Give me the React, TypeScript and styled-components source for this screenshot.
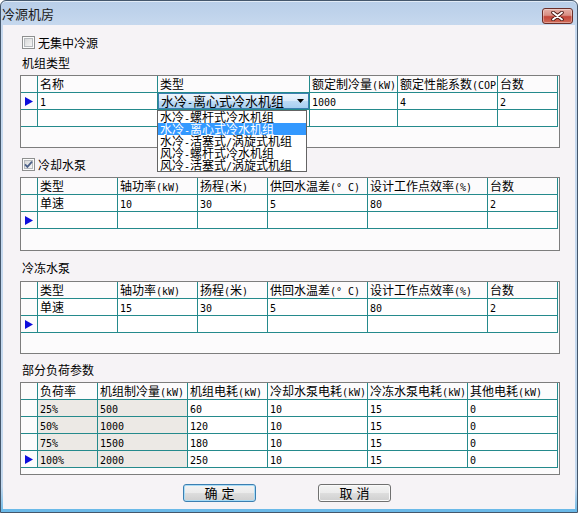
import React from "react";
import styled, { createGlobalStyle } from "styled-components";

const TEAL = "#248a8c";

const GlobalStyle = createGlobalStyle`
  html, body {
    margin: 0;
    padding: 0;
    background: #ffffff;
  }
  body {
    font-family: "Noto Sans CJK SC", "Noto Sans", sans-serif;
    font-size: 12px;
    color: #000;
  }
`;

const Window = styled.div`
  width: 578px;
  height: 513px;
  box-sizing: border-box;
  border: 1px solid #44576c;
  border-radius: 6px 6px 0 0;
  padding: 0 2px 3px;
  display: flex;
  flex-direction: column;
  background: linear-gradient(#b8cee8, #c6d8ee 24px, #c4d8ee 95%, #6fbbe8 100%);
  box-shadow: inset 0 -3px 0 #6ab9e8, inset 0 1px 0 #e1ebf6;
  overflow: hidden;
`;

const TitleBar = styled.div`
  height: 24px;
  flex-shrink: 0;
  display: flex;
  align-items: flex-start;
`;

const Title = styled.div`
  margin: 5px 0 0 -1px;
  font-size: 13px;
  line-height: 15px;
  color: #1b1b1b;
`;

const CloseButton = styled.div`
  margin: 7px 2px 0 auto;
  width: 31px;
  height: 16px;
  box-sizing: border-box;
  border: 1px solid #6b2e28;
  border-radius: 3px;
  background: linear-gradient(#e6b0a7, #d88e83 45%, #c4463a 55%, #d06b58);
  box-shadow: inset 0 0 0 1px rgba(255, 255, 255, 0.35);
  display: flex;
  align-items: center;
  justify-content: center;
`;

const Client = styled.div`
  flex: 1;
  background: #f6f3f6;
  padding-left: 17px;
  display: flex;
  flex-direction: column;
  align-items: flex-start;
`;

const CheckRow = styled.div<{ $top: number }>`
  margin: ${(p) => p.$top}px 0 0 2px;
  height: 13px;
  display: flex;
  align-items: center;
  gap: 3px;
  line-height: 13px;
`;

const Label = styled.div<{ $top: number }>`
  margin: ${(p) => p.$top}px 0 0 2px;
  height: 13px;
  line-height: 13px;
`;

const Latin = styled.span`
  font-family: "DejaVu Sans Mono", "Liberation Mono", monospace;
  font-size: 10px;
`;

const GridBox = styled.div<{ $top: number; $h: number }>`
  margin-top: ${(p) => p.$top}px;
  width: 540px;
  height: ${(p) => p.$h}px;
  box-sizing: border-box;
  border: 1px solid #7d7d7d;
  background: #fcfbfc;
`;

const GridRow = styled.div<{ $cols: string }>`
  display: grid;
  grid-template-columns: ${(p) => p.$cols};
`;

type Tone = "head" | "body" | "shade";

const Cell = styled.div<{ $tone: Tone }>`
  height: 17px;
  box-sizing: border-box;
  border-right: 1px solid ${TEAL};
  border-bottom: 1px solid ${TEAL};
  padding-left: 2px;
  line-height: 16px;
  white-space: nowrap;
  overflow: hidden;
  background: ${(p) =>
    p.$tone === "shade" ? "#ece9e5" : p.$tone === "head" ? "#fcfbfc" : "#ffffff"};
`;

const RowHead = styled(Cell)`
  padding-left: 4px;
  display: flex;
  align-items: center;
`;

const ComboCell = styled(Cell)`
  padding: 0;
  overflow: visible;
  position: relative;
`;

const Combo = styled.div`
  height: 100%;
  box-sizing: border-box;
  border: 1px solid #3c7fb1;
  background: linear-gradient(#edf5fc, #d9eafa 48%, #bddbf5 52%, #a8cff1);
  padding: 0 4px 0 2px;
  display: flex;
  align-items: center;
  justify-content: space-between;
  font-size: 13px;
  line-height: 15px;
`;

const DropList = styled.div`
  position: absolute;
  top: calc(100% + 1px);
  left: -1px;
  width: 150px;
  box-sizing: border-box;
  border: 1px solid #646464;
  background: #ffffff;
  z-index: 10;
`;

const DropItem = styled.div<{ $active?: boolean }>`
  height: 12px;
  padding-left: 2px;
  font-size: 12px;
  line-height: 12px;
  white-space: nowrap;
  background: ${(p) => (p.$active ? "#3399ff" : "transparent")};
  color: ${(p) => (p.$active ? "#ffffff" : "#000000")};
`;

const ButtonRow = styled.div`
  margin: 9px 0 0 163px;
  display: flex;
  gap: 62px;
`;

const Button = styled.div<{ $primary?: boolean }>`
  width: 73px;
  height: 18px;
  box-sizing: border-box;
  border: 1px solid ${(p) => (p.$primary ? "#3c7fb1" : "#707070")};
  border-radius: 3px;
  background: linear-gradient(#f4f4f4, #ebebeb 48%, #dddddd 52%, #cfcfcf);
  box-shadow: ${(p) => (p.$primary ? "inset 0 0 0 1px #a9dcf6" : "inset 0 0 0 1px #fafafa")};
  display: flex;
  align-items: center;
  justify-content: center;
  font-size: 13px;
  line-height: 14px;
  word-spacing: 1px;
`;

const mix = (s: string) =>
  s
    .split(/([\x20-\x7e°]+)/)
    .map((part, i) => (i % 2 ? <Latin key={i}>{part}</Latin> : part));

function Checkbox({ checked }: { checked?: boolean }) {
  const id = checked ? "cbg1" : "cbg0";
  return (
    <svg width="13" height="13" viewBox="0 0 13 13">
      <defs>
        <linearGradient id={id} x1="0" y1="0" x2="1" y2="1">
          <stop offset="0" stopColor="#d6d6d6" />
          <stop offset="1" stopColor="#f7f7f7" />
        </linearGradient>
      </defs>
      <rect x="0.5" y="0.5" width="12" height="12" fill="#fbfbfb" stroke="#8e8f8f" />
      <rect x="2.5" y="2.5" width="8" height="8" fill={`url(#${id})`} stroke="#b6b9bd" />
      {checked && (
        <path d="M3 6.3 L5.4 8.8 L10 3.6" fill="none" stroke="#4d6189" strokeWidth="1.8" />
      )}
    </svg>
  );
}

function Pointer() {
  return (
    <svg width="8" height="9" viewBox="0 0 8 9">
      <polygon points="0,0 8,4.5 0,9" fill="#0d0ddc" />
    </svg>
  );
}

type GridProps = {
  cols: string;
  top: number;
  height: number;
  header: string[];
  rows: string[][];
  current: number;
  shaded?: number[];
  custom?: (r: number, c: number) => React.ReactNode | null;
};

function Grid({ cols, top, height, header, rows, current, shaded = [], custom }: GridProps) {
  return (
    <GridBox $top={top} $h={height}>
      <GridRow $cols={cols}>
        <RowHead $tone="head" />
        {header.map((h, i) => (
          <Cell key={i} $tone="head">
            {mix(h)}
          </Cell>
        ))}
      </GridRow>
      {rows.map((row, r) => (
        <GridRow key={r} $cols={cols}>
          <RowHead $tone="head">{r === current && <Pointer />}</RowHead>
          {row.map((v, c) => {
            const node = custom ? custom(r, c) : null;
            if (node) return <React.Fragment key={c}>{node}</React.Fragment>;
            return (
              <Cell key={c} $tone={shaded.includes(c) ? "shade" : "body"}>
                {mix(v)}
              </Cell>
            );
          })}
        </GridRow>
      ))}
    </GridBox>
  );
}

const unitTypes = [
  "水冷-螺杆式冷水机组",
  "水冷-离心式冷水机组",
  "水冷-活塞式/涡旋式机组",
  "风冷-螺杆式冷水机组",
  "风冷-活塞式/涡旋式机组",
];

const pumpHeader = ["类型", "轴功率(kW)", "扬程(米)", "供回水温差(° C)", "设计工作点效率(%)", "台数"];

const loadRows = [
  ["25%", "500", "60", "10", "15", "0"],
  ["50%", "1000", "120", "10", "15", "0"],
  ["75%", "1500", "180", "10", "15", "0"],
  ["100%", "2000", "250", "10", "15", "0"],
];

export default function App() {
  const unitCell = (r: number, c: number) =>
    r === 0 && c === 1 ? (
      <ComboCell $tone="body">
        <Combo>
          <span>{mix(unitTypes[1])}</span>
          <svg width="7" height="4" viewBox="0 0 7 4">
            <polygon points="0,0 7,0 3.5,4" fill="#000" />
          </svg>
        </Combo>
        <DropList>
          {unitTypes.map((t, i) => (
            <DropItem key={t} $active={i === 1}>
              {mix(t)}
            </DropItem>
          ))}
        </DropList>
      </ComboCell>
    ) : null;

  return (
    <>
      <GlobalStyle />
      <Window>
        <TitleBar>
          <Title>冷源机房</Title>
          <CloseButton>
            <svg width="13" height="10" viewBox="0 0 13 10">
              <path d="M2 1.5 L11 8.5 M11 1.5 L2 8.5" stroke="#4a1712" strokeWidth="3.6" strokeLinecap="round" />
              <path d="M2 1.5 L11 8.5 M11 1.5 L2 8.5" stroke="#ffffff" strokeWidth="1.9" strokeLinecap="round" />
            </svg>
          </CloseButton>
        </TitleBar>
        <Client>
          <CheckRow $top={11}>
            <Checkbox />
            <span>无集中冷源</span>
          </CheckRow>
          <Label $top={7}>机组类型</Label>
          <Grid
            top={6}
            height={73}
            cols="17px 120px 152px 88px 100px 60px"
            header={["名称", "类型", "额定制冷量(kW)", "额定性能系数(COP", "台数"]}
            rows={[
              ["1", "", "1000", "4", "2"],
              ["", "", "", "", ""],
            ]}
            current={0}
            custom={unitCell}
          />
          <CheckRow $top={10}>
            <Checkbox checked />
            <span>冷却水泵</span>
          </CheckRow>
          <Grid
            top={6}
            height={74}
            cols="17px 80px 80px 70px 100px 120px 70px"
            header={pumpHeader}
            rows={[
              ["单速", "10", "30", "5", "80", "2"],
              ["", "", "", "", "", ""],
            ]}
            current={1}
          />
          <Label $top={10}>冷冻水泵</Label>
          <Grid
            top={7}
            height={73}
            cols="17px 80px 80px 70px 100px 120px 70px"
            header={pumpHeader}
            rows={[
              ["单速", "15", "30", "5", "80", "2"],
              ["", "", "", "", "", ""],
            ]}
            current={1}
          />
          <Label $top={9}>部分负荷参数</Label>
          <Grid
            top={6}
            height={93}
            cols="17px 60px 90px 80px 100px 100px 90px"
            header={["负荷率", "机组制冷量(kW)", "机组电耗(kW)", "冷却水泵电耗(kW)", "冷冻水泵电耗(kW)", "其他电耗(kW)"]}
            rows={loadRows}
            current={3}
            shaded={[0, 1]}
          />
          <ButtonRow>
            <Button $primary>确 定</Button>
            <Button>取 消</Button>
          </ButtonRow>
        </Client>
      </Window>
    </>
  );
}
